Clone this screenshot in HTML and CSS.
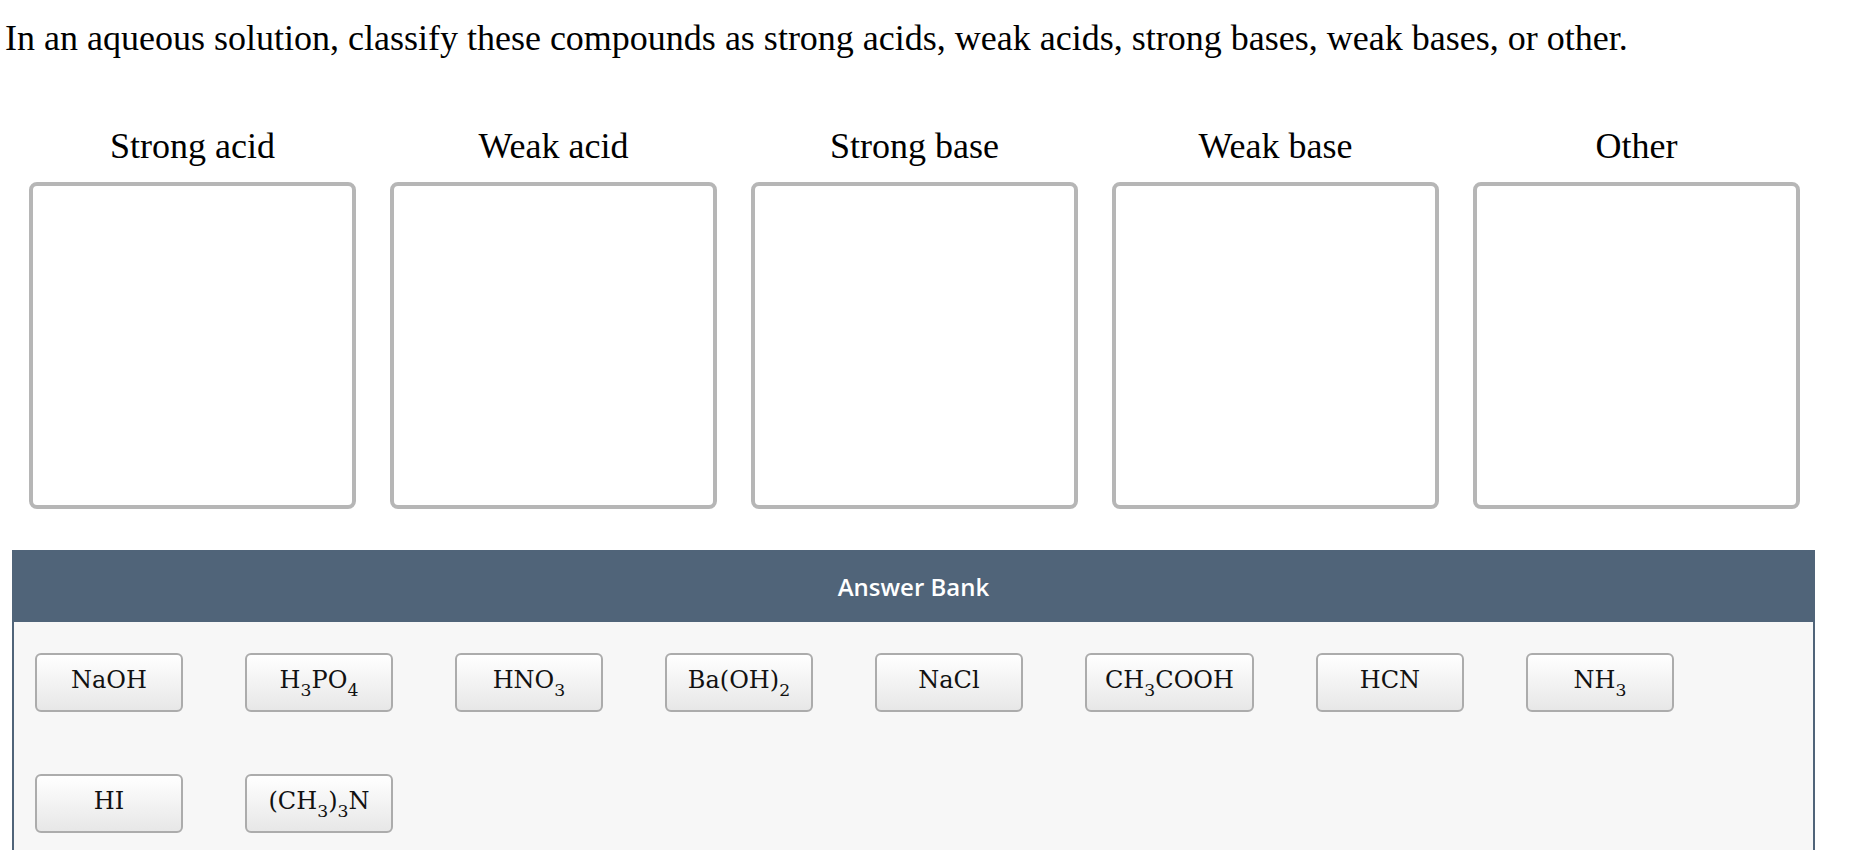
FILE: index.html
```html
<!DOCTYPE html>
<html lang="en">
<head>
<meta charset="utf-8">
<title>Classify compounds</title>
<link rel="stylesheet" href="styles.css">
</head>
<body>
<main class="question">
  <p class="prompt">In an aqueous solution, classify these compounds as strong acids, weak acids, strong bases, weak bases, or other.</p>

  <section class="bins">
    <div class="bin">
      <h2 class="bin-title">Strong acid</h2>
      <div class="drop-zone"></div>
    </div>
    <div class="bin">
      <h2 class="bin-title">Weak acid</h2>
      <div class="drop-zone"></div>
    </div>
    <div class="bin">
      <h2 class="bin-title">Strong base</h2>
      <div class="drop-zone"></div>
    </div>
    <div class="bin">
      <h2 class="bin-title">Weak base</h2>
      <div class="drop-zone"></div>
    </div>
    <div class="bin">
      <h2 class="bin-title">Other</h2>
      <div class="drop-zone"></div>
    </div>
  </section>

  <section class="bank">
    <header class="bank-header">Answer Bank</header>
    <div class="bank-body">
      <div class="chip"><span class="formula">NaOH</span></div>
      <div class="chip"><span class="formula">H<sub>3</sub>PO<sub>4</sub></span></div>
      <div class="chip"><span class="formula">HNO<sub>3</sub></span></div>
      <div class="chip"><span class="formula">Ba(OH)<sub>2</sub></span></div>
      <div class="chip"><span class="formula">NaCl</span></div>
      <div class="chip"><span class="formula">CH<sub>3</sub>COOH</span></div>
      <div class="chip"><span class="formula">HCN</span></div>
      <div class="chip"><span class="formula">NH<sub>3</sub></span></div>
      <div class="chip"><span class="formula">HI</span></div>
      <div class="chip"><span class="formula">(CH<sub>3</sub>)<sub>3</sub>N</span></div>
    </div>
  </section>
</main>
</body>
</html>
```

FILE: styles.css
```css
html, body {
  margin: 0;
  padding: 0;
  background: #ffffff;
}

body {
  font-family: "Liberation Serif", "Times New Roman", serif;
  color: #000000;
}

.question {
  padding-top: 18px;
}

/* question text */
.prompt {
  margin: 0;
  padding-left: 5px;
  font-size: 36px;
  line-height: 40px;
}

/* the five categories */
.bins {
  display: grid;
  grid-template-columns: repeat(5, 327px);
  column-gap: 34px;
  margin: 68px 0 0 29px;
}

.bin {
  display: flex;
  flex-direction: column;
  align-items: center;
}

.bin-title {
  margin: 0 0 16px;
  font-size: 36px;
  font-weight: normal;
  line-height: 40px;
}

.drop-zone {
  box-sizing: border-box;
  width: 327px;
  height: 327px;
  border: 4px solid #b6b6b6;
  border-radius: 8px;
  background: #ffffff;
}

/* answer bank */
.bank {
  width: 1803px;
  margin: 41px 0 0 12px;
}

.bank-header {
  height: 72px;
  display: flex;
  align-items: center;
  justify-content: center;
  background: #506479;
  color: #ffffff;
  font-family: "Open Sans", "Noto Sans", sans-serif;
  font-size: 24px;
  font-weight: 600;
}

.bank-body {
  display: flex;
  flex-wrap: wrap;
  column-gap: 62px;
  row-gap: 62px;
  padding: 31px 21px 40px;
  background: #f7f7f7;
  border: 2px solid #506479;
  border-top: 0;
}

.chip {
  box-sizing: border-box;
  min-width: 148px;
  height: 59px;
  padding: 0 18px 5px;
  display: flex;
  align-items: center;
  justify-content: center;
  border: 2px solid #acacac;
  border-radius: 6px;
  background: linear-gradient(#ffffff, #e7e7e7);
  font-family: "DejaVu Serif", "Liberation Serif", serif;
  font-size: 24px;
  color: #111111;
}

.formula {
  line-height: 1;
  white-space: nowrap;
}

.formula sub {
  font-size: 0.72em;
  line-height: 0;
  vertical-align: -0.45em;
}
```
